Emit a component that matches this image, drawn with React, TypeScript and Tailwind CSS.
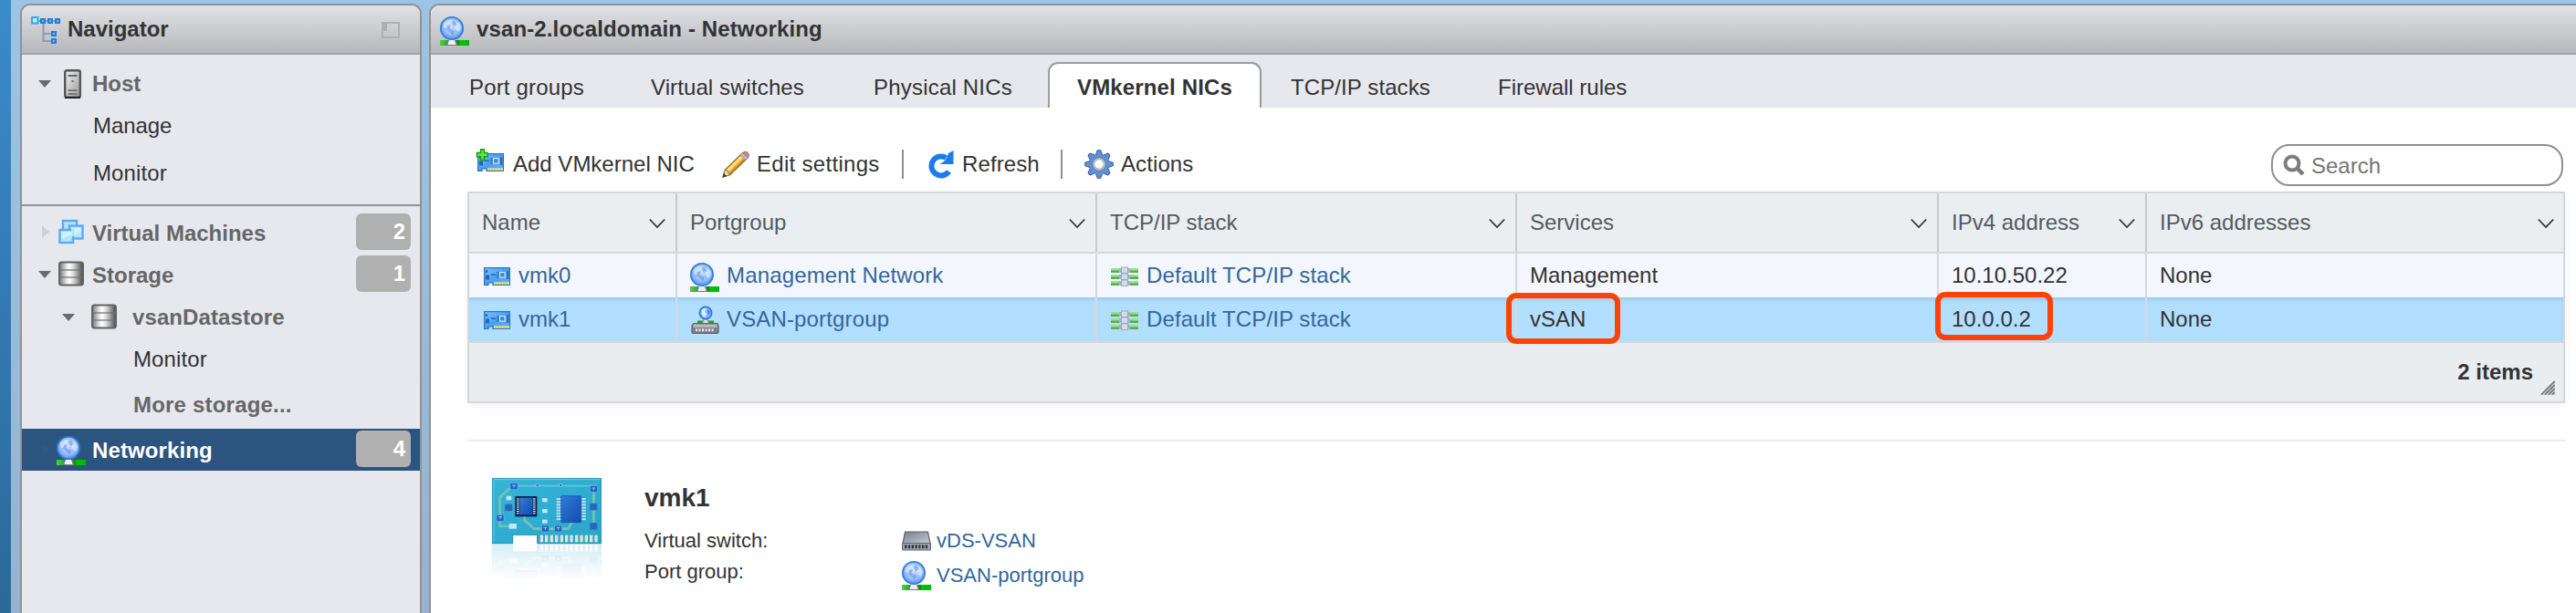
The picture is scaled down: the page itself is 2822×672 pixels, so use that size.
import React from "react";

function Globe({ className = "" }: { className?: string }) {
  return (
    <svg width="32" height="32" viewBox="0 0 32 32" className={"shrink-0 " + className}>
      <defs>
        <radialGradient id="globeFill" cx="0.5" cy="0.4" r="0.62">
          <stop offset="0" stopColor="#c3dbfd" />
          <stop offset="0.65" stopColor="#8fbaf8" />
          <stop offset="1" stopColor="#4a8fe8" />
        </radialGradient>
        <linearGradient id="globeBar" x1="0" x2="1" y1="0" y2="0">
          <stop offset="0" stopColor="#4fd04a" />
          <stop offset="0.25" stopColor="#22b022" />
          <stop offset="0.62" stopColor="#0a8a0a" />
          <stop offset="0.7" stopColor="#00c400" />
          <stop offset="1" stopColor="#00b400" />
        </linearGradient>
      </defs>
      <rect x="0" y="26" width="32" height="6" fill="url(#globeBar)" />
      <path d="M6.500 32 L8 27 Q13 24 18 27 L19.500 32 Z" fill="#7c7c7c" />
      <path d="M8.500 31 L10 26 H16 L17.500 31 Z" fill="#f0f0f0" />
      <circle cx="13" cy="13" r="12.100" fill="url(#globeFill)" stroke="#2f7fd8" strokeWidth="1.800" />
      <path d="M4 8 Q8 3 14 4 L12 7 L15 9 L12 12 L14 15 L12 20 L8 17 L7 13 L4 12 Z" fill="#eef5ff" opacity="0.55" />
      <path d="M17 5 Q22 7 23 12 L21 17 L18 15 L16 11 L19 9 Z" fill="#eef5ff" opacity="0.6" />
      <path d="M8 10 L12 9 L11 13 L16 16 L14 20 L10 18 L7 14 Z" fill="#6a92ee" opacity="0.65" />
      <path d="M14 5 L18 7 L16 11 L13 9 Z" fill="#6a92ee" opacity="0.5" />
    </svg>
  );
}

function NavTree() {
  return (
    <svg width="32" height="32" viewBox="0 0 32 32" className="shrink-0">
      <path d="M8 5 H30 M13.500 6 V27 H24 M13.500 19 H24" fill="none" stroke="#8a9bb8" strokeWidth="2" />
      <rect x="1" y="1" width="6.500" height="6.500" fill="#b5ecff" stroke="#35a9e6" strokeWidth="2" />
      {[
        [11, 3],
        [19, 3],
        [27, 3],
        [23, 17],
        [23, 25],
      ].map(([x, y]) => (
        <rect key={x + "-" + y} x={x} y={y} width="4" height="4" fill="#6cc0ff" stroke="#1f7fd6" strokeWidth="2" />
      ))}
    </svg>
  );
}

function HostIcon() {
  return (
    <svg width="19" height="32" viewBox="0 0 19 32" className="shrink-0">
      <defs>
        <linearGradient id="hostFill" x1="0" x2="1" y1="0" y2="1">
          <stop offset="0" stopColor="#f0f0f0" />
          <stop offset="1" stopColor="#9c9c9c" />
        </linearGradient>
      </defs>
      <rect x="1.200" y="1.200" width="16.600" height="29.600" rx="2" fill="url(#hostFill)" stroke="#555" strokeWidth="2.400" />
      <rect x="4.500" y="6" width="10" height="2" fill="#666" />
      <circle cx="9.500" cy="13" r="1.300" fill="#777" />
      <rect x="4.500" y="22" width="10" height="2" fill="#777" />
      <rect x="4.500" y="26" width="10" height="2" fill="#777" />
      <rect x="1" y="30" width="17" height="2" fill="#222" />
    </svg>
  );
}

function VmIcon() {
  return (
    <svg width="28" height="28" viewBox="0 0 28 28" className="shrink-0">
      <g fill="#b4e4ff" stroke="#5aaaf0" strokeWidth="2.400">
        <rect x="5" y="2" width="15" height="14" />
        <rect x="12" y="7.500" width="14.500" height="14" />
        <rect x="1.500" y="12" width="14.500" height="14" />
      </g>
      <path d="M14 10 H25 V14 L14 20 Z" fill="#dcf5ff" opacity="0.7" />
      <path d="M3 14 H14 V17 L3 22 Z" fill="#dcf5ff" opacity="0.7" />
    </svg>
  );
}

function StorageIcon() {
  return (
    <svg width="28" height="28" viewBox="0 0 28 28" className="shrink-0">
      <defs>
        <linearGradient id="storeFill" x1="0" x2="1" y1="0" y2="0">
          <stop offset="0" stopColor="#747474" />
          <stop offset="0.3" stopColor="#e6e6e6" />
          <stop offset="0.42" stopColor="#ffffff" />
          <stop offset="0.6" stopColor="#d8d8d8" />
          <stop offset="1" stopColor="#484848" />
        </linearGradient>
      </defs>
      <rect x="1" y="1.500" width="26" height="25" rx="2.500" fill="url(#storeFill)" stroke="#626262" strokeWidth="2" />
      <path d="M2 10 H26 M2 18 H26" stroke="#6f6f6f" strokeOpacity="0.6" strokeWidth="1.800" />
    </svg>
  );
}

function NicIcon({ add = false }: { add?: boolean }) {
  return (
    <svg width="32" height="28" viewBox="0 0 32 28" className="shrink-0">
      <defs>
        <linearGradient id="nicFill" x1="0" x2="1" y1="0" y2="1">
          <stop offset="0" stopColor="#7dc3ff" />
          <stop offset="0.5" stopColor="#4a9ff2" />
          <stop offset="1" stopColor="#5eb4ff" />
        </linearGradient>
      </defs>
      <path d="M2.600 5.600 H30.400 V24.400 H12 V22 H7 V24.400 H2.600 Z" fill="url(#nicFill)" stroke="#2a74bd" strokeWidth="1.200" />
      <g fill="#2464b0">
        <rect x="4" y="8" width="2" height="3" />
        <rect x="4" y="13.500" width="4" height="5" />
        <rect x="10" y="12.500" width="5" height="1.500" />
        <rect x="16" y="10" width="3" height="7" opacity="0.45" />
        <rect x="27" y="9" width="2.500" height="9" opacity="0.8" />
      </g>
      <rect x="19.600" y="10.600" width="5.500" height="5.500" fill="#3984d8" stroke="#d3e8ff" strokeWidth="1.200" />
      <rect x="13" y="21.200" width="17" height="2.600" fill="#f6e38e" />
      <path d="M15 21.200 v2.600 M18 21.200 v2.600 M21 21.200 v2.600 M24 21.200 v2.600 M27 21.200 v2.600" stroke="#b9983a" strokeWidth="0.700" />
      {add && (
        <path
          d="M5.500 0.800 H9.500 V4.500 H13.300 V8.800 H9.500 V12.500 H5.500 V8.800 H1.500 V4.500 H5.500 Z"
          fill="#5be84c"
          stroke="#189a18"
          strokeWidth="1.400"
        />
      )}
    </svg>
  );
}

function PencilIcon() {
  return (
    <svg width="32" height="32" viewBox="0 0 32 32" className="shrink-0">
      <path d="M2 30 L4.500 22 L23 4 L29 9 L10 27.500 Z" fill="#f3b83a" stroke="#8b6a26" strokeWidth="1.300" />
      <path d="M6.500 23.500 L24.500 6" stroke="#ffe08a" strokeWidth="2.500" />
      <path d="M9 26.500 L27 9" stroke="#c98a1c" strokeWidth="1.500" />
      <path d="M2 30 L4.500 22 L7 23 L8 26 L10 27.500 Z" fill="#ecd9ac" stroke="#7a6a40" strokeWidth="0.800" />
      <path d="M1.500 30.500 L3 26 L6 29 Z" fill="#3a3a3a" />
      <path d="M21 6 L24 3 L30 8.500 L27 11.500 Z" fill="#b9bcc2" stroke="#878a90" strokeWidth="0.800" />
      <path d="M23.500 3.500 Q26 1 29 3 Q32 5.500 29.500 8.800 Z" fill="#d98282" stroke="#a86060" strokeWidth="0.800" />
    </svg>
  );
}

function RefreshIcon() {
  return (
    <svg width="30" height="32" viewBox="0 0 30 32" className="shrink-0">
      <path d="M23.500 24 A10.500 10.500 0 1 1 20.500 9" fill="none" stroke="#1c7cec" strokeWidth="6" />
      <path d="M28.500 1 V16 H13 Q21 13 23 4 Z" fill="#1c7cec" />
    </svg>
  );
}

const teeth = [0, 45, 90, 135, 180, 225, 270, 315];

function GearIcon() {
  return (
    <svg width="32" height="32" viewBox="0 0 32 32" className="shrink-0">
      {teeth.map((a) => (
        <path key={a} d="M12 7 L14.200 1 Q16 0 17.800 1 L20 7 Z" transform={`rotate(${a} 16 16)`} fill="#5b92df" stroke="#56688a" strokeWidth="1.200" />
      ))}
      <circle cx="16" cy="16" r="10.500" fill="#5b92df" />
      <circle cx="16" cy="16" r="6" fill="#fff" stroke="#b5b9bf" strokeWidth="2.600" />
      <circle cx="16" cy="16" r="7.500" fill="none" stroke="#667590" strokeWidth="0.800" />
    </svg>
  );
}

function StackIcon() {
  return (
    <svg width="32" height="24" viewBox="0 0 32 24" className="shrink-0">
      {[2, 9, 16].map((y) => (
        <g key={y}>
          <rect x="1" y={y + 1} width="30" height="5" fill="#5aac54" />
          <rect x="1" y={y + 1} width="30" height="2.500" fill="#9be08c" />
          <rect x="10" y={y + 1} width="12" height="5" fill="#9fb4c8" />
          <rect x="12.500" y={y} width="7" height="6.500" fill="#d3dde8" stroke="#8fa0b2" strokeWidth="0.800" />
        </g>
      ))}
    </svg>
  );
}

function PortgroupIcon() {
  return (
    <svg width="32" height="32" viewBox="0 0 32 32" className="shrink-0">
      <rect x="8" y="17.500" width="18" height="4" fill="#15a815" />
      <path d="M13 22 L15 16 H19 L21 22 Z" fill="#dcdcdc" stroke="#888" strokeWidth="0.800" />
      <circle cx="17" cy="9" r="6.600" fill="#8dbcf9" stroke="#2c7bdc" strokeWidth="1.800" />
      <path d="M12.500 6 Q15 3.500 18 4 L16 8 L18 10 L16 14 L13 11 Z" fill="#e2efff" />
      <path d="M19 5 L22 8 L20 12 Z" fill="#3f74e2" />
      <path d="M4 20.500 H30 L31 23 V30 Q31 31.300 29.500 31.300 H3.500 Q2 31.300 2 30 V23 Z" fill="#7b828a" stroke="#5c6269" strokeWidth="1.200" />
      <path d="M4 21.500 H29.500 L30 25 H3 Z" fill="#b2b8bf" />
      <path d="M6 27.800 H27" stroke="#e6e9ec" strokeWidth="3" strokeDasharray="2 1.500" />
    </svg>
  );
}

function SwitchIcon() {
  return (
    <svg width="32" height="22" viewBox="0 0 32 22" className="shrink-0">
      <defs>
        <linearGradient id="swTop" x1="0" x2="1" y1="0" y2="1">
          <stop offset="0" stopColor="#76808c" />
          <stop offset="1" stopColor="#c2cad3" />
        </linearGradient>
      </defs>
      <path d="M3.500 1 H28.500 L31 13.500 H1 Z" fill="url(#swTop)" stroke="#59616b" strokeWidth="1.200" />
      <rect x="0.600" y="13.500" width="30.800" height="7.500" rx="1" fill="#a4acb6" stroke="#5f666f" strokeWidth="1.200" />
      <path d="M3 17.300 H29" stroke="#34383d" strokeWidth="4" strokeDasharray="2.400 1.400" />
    </svg>
  );
}

const smallChips = [
  [100, 60],
  [362, 69],
  [55, 164],
  [203, 199],
  [246, 199],
];
const crossChips = [
  [82, 129],
  [361, 126],
  [361, 190],
];
const pads = [
  [87, 102, 17, 14],
  [205, 109, 17, 13],
  [205, 145, 17, 13],
  [205, 180, 17, 12],
  [96, 193, 25, 17],
];
const fingers = [198, 214, 231, 247, 264, 280, 296, 313, 329, 345, 361, 377];
const pinRows = [0, 1, 2, 3, 4, 5, 6, 7];

function Board() {
  return (
    <g>
      <path d="M41 44 H399 V258 H189 V230 H108 V258 H41 Z" fill="url(#pcb)" stroke="#1f8fb5" strokeWidth="3" />
      <path d="M45 48 H395" stroke="#8fdcec" strokeWidth="2" />
      <path d="M46 48 V252" stroke="#7fd3e6" strokeWidth="2" />
      <path d="M112 69 H384" stroke="#74cfe0" strokeWidth="5" opacity="0.7" fill="none" />
      <path d="M102 74 L66 106 V202 H105 M147 168 V182 L178 210 H290 L302 188 M374 90 V194" fill="none" stroke="#73c3b4" strokeWidth="8" />
      {smallChips.map(([x, y]) => (
        <g key={x}>
          <rect x={x} y={y} width="24" height="21" fill="#1e60bf" stroke="#64b8e8" strokeWidth="2" />
          <path d={`M${x + 6} ${y + 7} h12 M${x + 12} ${y + 7} v8`} stroke="#8fc9f2" strokeWidth="3" />
        </g>
      ))}
      {crossChips.map(([x, y]) => (
        <rect key={x + "-" + y} x={x} y={y} width="25" height="23" rx="3" fill="#2467bf" stroke="#3a92d2" strokeWidth="3" strokeDasharray="9 4" />
      ))}
      {pads.map(([x, y, w, h]) => (
        <rect key={x + "-" + y} x={x} y={y} width={w} height={h} fill="#bfe6fa" />
      ))}
      <circle cx="189" cy="67" r="5" fill="#2b6fc4" stroke="#a7dcf0" strokeWidth="2" />
      <circle cx="265" cy="67" r="5" fill="#2b6fc4" stroke="#a7dcf0" strokeWidth="2" />
      <rect x="116" y="103" width="72" height="67" fill="#0d1f4d" />
      <rect x="131" y="108" width="43" height="56" fill="url(#chip)" />
      {pinRows.map((i) => (
        <g key={i} fill="#d9eefb">
          <rect x="121" y={110 + i * 6.8} width="8" height="3.500" />
          <rect x="175" y={110 + i * 6.8} width="8" height="3.500" />
          <rect x="252" y={109 + i * 9.5} width="16" height="6" opacity="0.8" />
          <rect x="332" y={109 + i * 9.5} width="16" height="6" opacity="0.8" />
        </g>
      ))}
      <rect x="267" y="102" width="66" height="87" rx="3" fill="url(#chip)" stroke="#1748a0" strokeWidth="2" />
      {fingers.map((x) => (
        <rect key={x} x={x} y="231" width="10" height="23" fill="#d9e6d8" />
      ))}
    </g>
  );
}

function NicCard() {
  return (
    <svg width="120" height="114" viewBox="40 43 360 342" className="shrink-0">
      <defs>
        <linearGradient id="pcb" x1="0" x2="1" y1="0" y2="1">
          <stop offset="0" stopColor="#35b4d6" />
          <stop offset="1" stopColor="#2aa5c9" />
        </linearGradient>
        <linearGradient id="chip" x1="0" x2="1" y1="0" y2="1">
          <stop offset="0" stopColor="#2f7dd8" />
          <stop offset="1" stopColor="#134bab" />
        </linearGradient>
        <linearGradient id="fade" x1="0" x2="0" y1="0" y2="1">
          <stop offset="0" stopColor="#fff" stopOpacity="0.2" />
          <stop offset="1" stopColor="#fff" stopOpacity="0" />
        </linearGradient>
        <mask id="fadeMask" maskUnits="userSpaceOnUse" x="40" y="258" width="360" height="127">
          <rect x="40" y="260" width="360" height="120" fill="url(#fade)" />
        </mask>
      </defs>
      <Board />
      <g mask="url(#fadeMask)">
        <g transform="translate(0 516) scale(1 -1)">
          <Board />
        </g>
      </g>
    </svg>
  );
}

function Chevron({ className = "mr-[10px]" }: { className?: string }) {
  return (
    <svg width="20" height="12" viewBox="0 0 20 12" className={"ml-auto mt-[2px] shrink-0 " + className}>
      <path d="M1.800 1.500 L10 10 L18.200 1.500" fill="none" stroke="#333" strokeWidth="1.800" />
    </svg>
  );
}

function Down({ className = "" }: { className?: string }) {
  return (
    <svg width="16" height="10" viewBox="0 0 16 10" className={"shrink-0 " + className}>
      <path d="M1 1 H15 L8 9 Z" fill="#6a6a6a" />
    </svg>
  );
}

function Right({ className = "" }: { className?: string }) {
  return (
    <svg width="10" height="16" viewBox="0 0 10 16" className={"shrink-0 " + className}>
      <path d="M1 1 V15 L9 8 Z" fill="currentColor" />
    </svg>
  );
}

function Badge({ n }: { n: number }) {
  return (
    <span className="mr-[10px] ml-auto h-[40px] w-[60px] rounded-[6px] bg-[#b0b0b0] pr-[6px] text-right font-bold leading-[39px] text-white">
      {n}
    </span>
  );
}

const tabs = [
  { label: "Port groups", cls: "ml-[26px] w-[168px] pl-[16px] tracking-[0.16px]" },
  { label: "Virtual switches", cls: "w-[230px] pl-[47px] tracking-[0.1px]" },
  { label: "Physical NICs", cls: "w-[208px] pl-[61px] tracking-[0.2px]" },
];

const headCell = "flex items-center pl-[14px] text-[#545a5f] border-r-2 border-[#c9cbcd]";
const grid = "grid grid-cols-[228px_460px_460px_462px_228px_458px]";

const rows = [
  { name: "vmk0", group: "Management Network", services: "Management", v4: "10.10.50.22", v6: "None" },
  { name: "vmk1", group: "VSAN-portgroup", services: "vSAN", v4: "10.0.0.2", v6: "None" },
];

function Row({ row, selected }: { row: (typeof rows)[number]; selected: boolean }) {
  const cell = "flex items-center border-r-2 border-[#d6d8da] ";
  const bg = selected
    ? "bg-[#b2dfff] shadow-[inset_0_4px_4px_-2px_rgba(60,110,150,0.25)]"
    : "bg-[#f3f6fc]";
  return (
    <div className={grid + " h-[48px] " + bg}>
      <div className={cell + "pl-[14px] text-[#33669d]"}>
        <NicIcon />
        <span className="ml-[8px]">{row.name}</span>
      </div>
      <div className={cell + "pl-[14px] text-[#33669d]"}>
        {selected ? <PortgroupIcon /> : <Globe className="mt-[4px]" />}
        <span className="ml-[8px] tracking-[0.15px]">{row.group}</span>
      </div>
      <div className={cell + "pl-[14px] text-[#33669d]"}>
        <span className="flex pt-[2px]">
          <StackIcon />
        </span>
        <span className="ml-[8px] tracking-[0.1px]">Default TCP/IP stack</span>
      </div>
      <div className={cell + "relative pl-[14px]"}>
        {row.services}
        {selected && (
          <span className="absolute -left-[12px] -top-[5px] h-[56px] w-[125px] rounded-[11px] border-[6px] border-[#ff4306]" />
        )}
      </div>
      <div className={cell + "relative pl-[14px]"}>
        {row.v4}
        {selected && (
          <span className="absolute -left-[4px] -top-[6px] h-[53px] w-[129px] rounded-[11px] border-[6px] border-[#ff4306]" />
        )}
      </div>
      <div className="flex items-center pl-[14px]">{row.v6}</div>
    </div>
  );
}

export default function App() {
  return (
    <div className="flex h-[672px] w-[2822px] overflow-hidden bg-[linear-gradient(180deg,#9cc4e6,#95b3cf)] font-['Liberation_Sans',Arial,sans-serif] text-[24px] leading-[28px] text-[#333]">
      <div className="w-[12px] shrink-0 bg-[linear-gradient(180deg,#3a8bca,#2b6999)]" />

      <aside className="mt-[4px] ml-[10px] flex w-[440px] shrink-0 flex-col rounded-t-[11px] border-2 border-b-0 border-[#929292] bg-[#e7e8ee]">
        <div className="flex h-[54px] items-center rounded-t-[9px] border-b-2 border-[#a2a3a5] bg-[linear-gradient(180deg,#e0e1e6,#b7b8bb)] pl-[10px]">
          <span className="mt-[4px]">
            <NavTree />
          </span>
          <span className="ml-[8px] font-bold">Navigator</span>
          <svg width="20" height="18" viewBox="0 0 20 18" className="mr-[22px] ml-auto mt-[2px]">
            <rect x="1" y="1" width="18" height="16" fill="none" stroke="#b0b0b3" strokeWidth="2" />
            <rect x="1" y="1" width="5" height="9" fill="#b0b0b3" />
          </svg>
        </div>

        <div className="h-[166px] border-b-2 border-[#929292] pt-[8px]">
          <div className="flex h-[48px] items-center pl-[17px] font-bold text-[#666]">
            <Down />
            <span className="ml-[13px]">
              <HostIcon />
            </span>
            <span className="ml-[12px]">Host</span>
          </div>
          <div className="flex h-[44px] items-center pl-[78px] tracking-[-0.1px]">Manage</div>
          <div className="flex h-[60px] items-center pl-[78px] tracking-[0.1px]">Monitor</div>
        </div>

        <div className="pt-[5px] font-bold text-[#666]">
          <div className="flex h-[46px] items-center">
            <Right className="ml-[21px] text-[#cfd0d4]" />
            <span className="ml-[9px]">
              <VmIcon />
            </span>
            <span className="ml-[9px] mt-[3px]">Virtual Machines</span>
            <Badge n={2} />
          </div>
          <div className="flex h-[46px] items-center">
            <Down className="ml-[17px] mt-[2px]" />
            <span className="ml-[7px]">
              <StorageIcon />
            </span>
            <span className="ml-[9px] mt-[3px]">Storage</span>
            <Badge n={1} />
          </div>
          <div className="flex h-[48px] items-center">
            <Down className="ml-[43px] mt-[2px]" />
            <span className="ml-[17px]">
              <StorageIcon />
            </span>
            <span className="ml-[17px] mt-[2px] tracking-[0.1px]">vsanDatastore</span>
          </div>
          <div className="flex h-[46px] items-center pl-[122px] font-normal tracking-[0.1px] text-[#333]">Monitor</div>
          <div className="flex h-[53px] items-center pl-[122px]">
            <span className="tracking-[0.2px]">More storage...</span>
          </div>
          <div className="flex h-[46px] items-center bg-[#2b547f] text-white">
            <Right className="ml-[21px] text-[#34587c]" />
            <span className="ml-[7px] mt-[2px]">
              <Globe />
            </span>
            <span className="ml-[7px] mt-[2px] tracking-[0.1px]">Networking</span>
            <span className="ml-auto -mt-[2px] flex">
              <Badge n={4} />
            </span>
          </div>
        </div>
      </aside>

      <main className="mt-[4px] ml-[8px] flex w-[2352px] shrink-0 flex-col rounded-tl-[11px] border-t-2 border-l-2 border-[#929292] bg-white">
        <div className="flex h-[54px] shrink-0 items-center rounded-tl-[9px] border-b-2 border-[#a2a3a5] bg-[linear-gradient(180deg,#e0e1e6,#b7b8bb)] pl-[10px]">
          <span className="mt-[4px]">
            <Globe />
          </span>
          <span className="ml-[8px] font-bold tracking-[0.13px]">vsan-2.localdomain - Networking</span>
        </div>

        <div className="flex h-[58px] shrink-0 items-center bg-[#e7e8ee]">
          {tabs.map((t) => (
            <div key={t.label} className={"shrink-0 whitespace-nowrap pt-[14px] " + t.cls}>
              {t.label}
            </div>
          ))}
          <div className="ml-[44px] mt-[8px] h-[50px] w-[234px] shrink-0 rounded-t-[11px] border-2 border-b-0 border-[#9a9b9e] bg-white text-center font-bold leading-[52px] tracking-[0.15px]">
            VMkernel NICs
          </div>
          <div className="ml-[32px] w-[227px] shrink-0 pt-[14px] tracking-[0.1px]">TCP/IP stacks</div>
          <div className="shrink-0 pt-[14px]">Firewall rules</div>
        </div>

        <div className="flex h-[92px] shrink-0 items-center pt-[32px] pl-[49px]">
          <span className="mb-[6px]">
            <NicIcon add />
          </span>
          <span className="ml-[9px] w-[228px]">Add VMkernel NIC</span>
          <PencilIcon />
          <span className="ml-[7px] w-[159px] tracking-[0.3px]">Edit settings</span>
          <span className="h-[32px] w-[2px] bg-[#8e8e8e]" />
          <span className="ml-[26px] flex">
            <RefreshIcon />
          </span>
          <span className="ml-[8px] w-[108px] tracking-[0.1px]">Refresh</span>
          <span className="h-[32px] w-[2px] bg-[#8e8e8e]" />
          <span className="ml-[24px] flex">
            <GearIcon />
          </span>
          <span className="ml-[8px] tracking-[0.1px]">Actions</span>
          <div className="mr-[14px] mt-[2px] ml-auto flex h-[46px] w-[320px] items-center rounded-[20px] border-2 border-[#8e8e8e] bg-white pl-[10px] text-[#757575]">
            <svg width="26" height="26" viewBox="0 0 26 26">
              <circle cx="11" cy="11" r="7.500" fill="none" stroke="#7c7c7c" strokeWidth="4" />
              <path d="M16 16 L23 23" stroke="#7c7c7c" strokeWidth="4.500" />
            </svg>
            <span className="ml-[6px] mt-[2px]">Search</span>
          </div>
        </div>

        <div className="ml-[40px] h-[232px] w-[2298px] shrink-0 border-2 border-[#d6d7d8] shadow-[0_2px_8px_rgba(0,0,0,0.06)]">
          <div className={grid + " h-[66px] border-b-2 border-[#d6d7d8] bg-[#eaeef1]"}>
            <div className={headCell}>Name<Chevron /></div>
            <div className={headCell}>Portgroup<Chevron /></div>
            <div className={headCell}>TCP/IP stack<Chevron /></div>
            <div className={headCell}>Services<Chevron /></div>
            <div className={headCell}>IPv4 address<Chevron /></div>
            <div className="flex items-center pl-[14px] text-[#545a5f]">IPv6 addresses<Chevron className="mr-[11px]" /></div>
          </div>
          {rows.map((r, i) => (
            <Row key={r.name} row={r} selected={i === 1} />
          ))}
          <div className="flex h-[66px] items-center justify-end border-t-2 border-[#d6d7d8] bg-[#eaedf0] font-bold">
            <span className="mr-[8px]">2 items</span>
            <svg width="16" height="16" viewBox="0 0 16 16" className="mt-[34px] mr-[9px]">
              <path d="M0 16 L16 0 V16 Z" fill="#c9cbcd" />
              <path d="M1 15.500 L15.500 1 M5 15.500 L15.500 5 M9 15.500 L15.500 9 M13 15.500 L15.500 13" stroke="#777" strokeWidth="1.600" />
            </svg>
          </div>
        </div>

        <div className="ml-[40px] mt-[40px] h-[2px] w-[2298px] shrink-0 bg-[#ededed]" />

        <div className="flex pl-[67px] pt-[40px] text-[22px]">
          <NicCard />
          <div className="ml-[47px] pt-[4px]">
            <h2 className="h-[48px] text-[28px] font-bold leading-[36px]">vmk1</h2>
            <div className="flex h-[34px] items-center">
              <span className="w-[282px]">Virtual switch:</span>
              <SwitchIcon />
              <span className="ml-[6px] text-[#33669d]">vDS-VSAN</span>
            </div>
            <div className="flex h-[34px] items-center">
              <span className="w-[282px]">Port group:</span>
              <span className="mt-[8px]">
                <Globe />
              </span>
              <span className="ml-[6px] mt-[8px] text-[#33669d]">VSAN-portgroup</span>
            </div>
          </div>
        </div>
      </main>
    </div>
  );
}
